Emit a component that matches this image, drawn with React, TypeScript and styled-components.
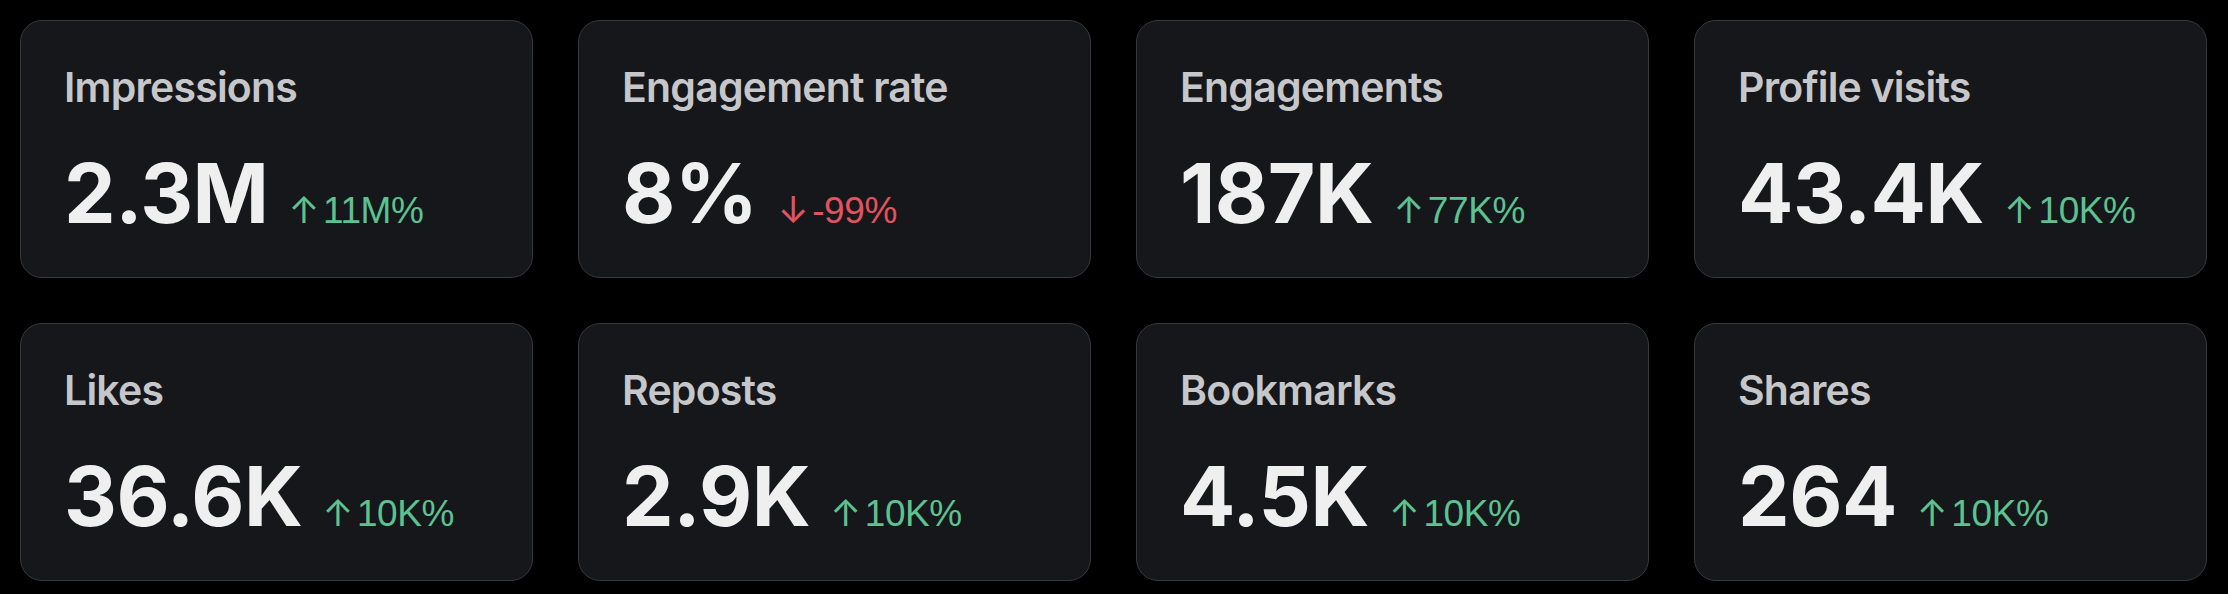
import React from "react";
import styled, { createGlobalStyle } from "styled-components";

const GlobalStyle = createGlobalStyle`
  html, body {
    margin: 0;
    padding: 0;
    background: #000000;
  }
  body {
    font-family: Inter, "Liberation Sans", Arial, sans-serif;
    -webkit-font-smoothing: antialiased;
  }
`;

const Page = styled.main`
  box-sizing: border-box;
  width: 2228px;
  height: 594px;
  padding: 20px 21px 13px 20px;
  background: #000000;
`;

const Grid = styled.div`
  display: grid;
  grid-template-columns: repeat(4, 1fr);
  column-gap: 45px;
  row-gap: 45px;
`;

const Card = styled.section`
  box-sizing: border-box;
  height: 258px;
  padding: 42px 42px 0 43px;
  background: #16171b;
  border: 1.5px solid #37383c;
  border-radius: 22px;
  display: flex;
  flex-direction: column;
  gap: 41px;
`;

const Label = styled.div`
  font-family: Inter, "Liberation Sans", sans-serif;
  font-size: 41px;
  line-height: 49px;
  font-weight: 600;
  color: #c6c7ca;
  letter-spacing: -0.8px;
`;

const ValueRow = styled.div`
  display: flex;
  align-items: baseline;
  gap: 20px;
`;

const Value = styled.span`
  font-family: Inter, "Liberation Sans", sans-serif;
  font-size: 82px;
  line-height: 82px;
  font-weight: 700;
  color: #efeff0;
  letter-spacing: -0.5px;
`;

const Change = styled.span<{ $down?: boolean }>`
  font-family: "Liberation Sans", Inter, Arial, sans-serif;
  font-size: 37px;
  line-height: 42px;
  font-weight: 400;
  color: ${(p) => (p.$down ? "#e2535f" : "#5cc291")};
  letter-spacing: -0.4px;
`;

const Arrow = styled.span`
  font-family: Inter, sans-serif;
  font-weight: 400;
  margin-right: 4px;
`;

type Metric = { label: string; value: string; change: string; down?: boolean };

const metrics: Metric[] = [
  { label: "Impressions", value: "2.3M", change: "11M%" },
  { label: "Engagement rate", value: "8%", change: "-99%", down: true },
  { label: "Engagements", value: "187K", change: "77K%" },
  { label: "Profile visits", value: "43.4K", change: "10K%" },
  { label: "Likes", value: "36.6K", change: "10K%" },
  { label: "Reposts", value: "2.9K", change: "10K%" },
  { label: "Bookmarks", value: "4.5K", change: "10K%" },
  { label: "Shares", value: "264", change: "10K%" },
];

export default function App() {
  return (
    <>
      <GlobalStyle />
      <Page>
        <Grid>
          {metrics.map((m) => (
            <Card key={m.label}>
              <Label>{m.label}</Label>
              <ValueRow>
                <Value>{m.value}</Value>
                <Change $down={m.down}>
                  <Arrow>{m.down ? "↓" : "↑"}</Arrow>
                  {m.change}
                </Change>
              </ValueRow>
            </Card>
          ))}
        </Grid>
      </Page>
    </>
  );
}
